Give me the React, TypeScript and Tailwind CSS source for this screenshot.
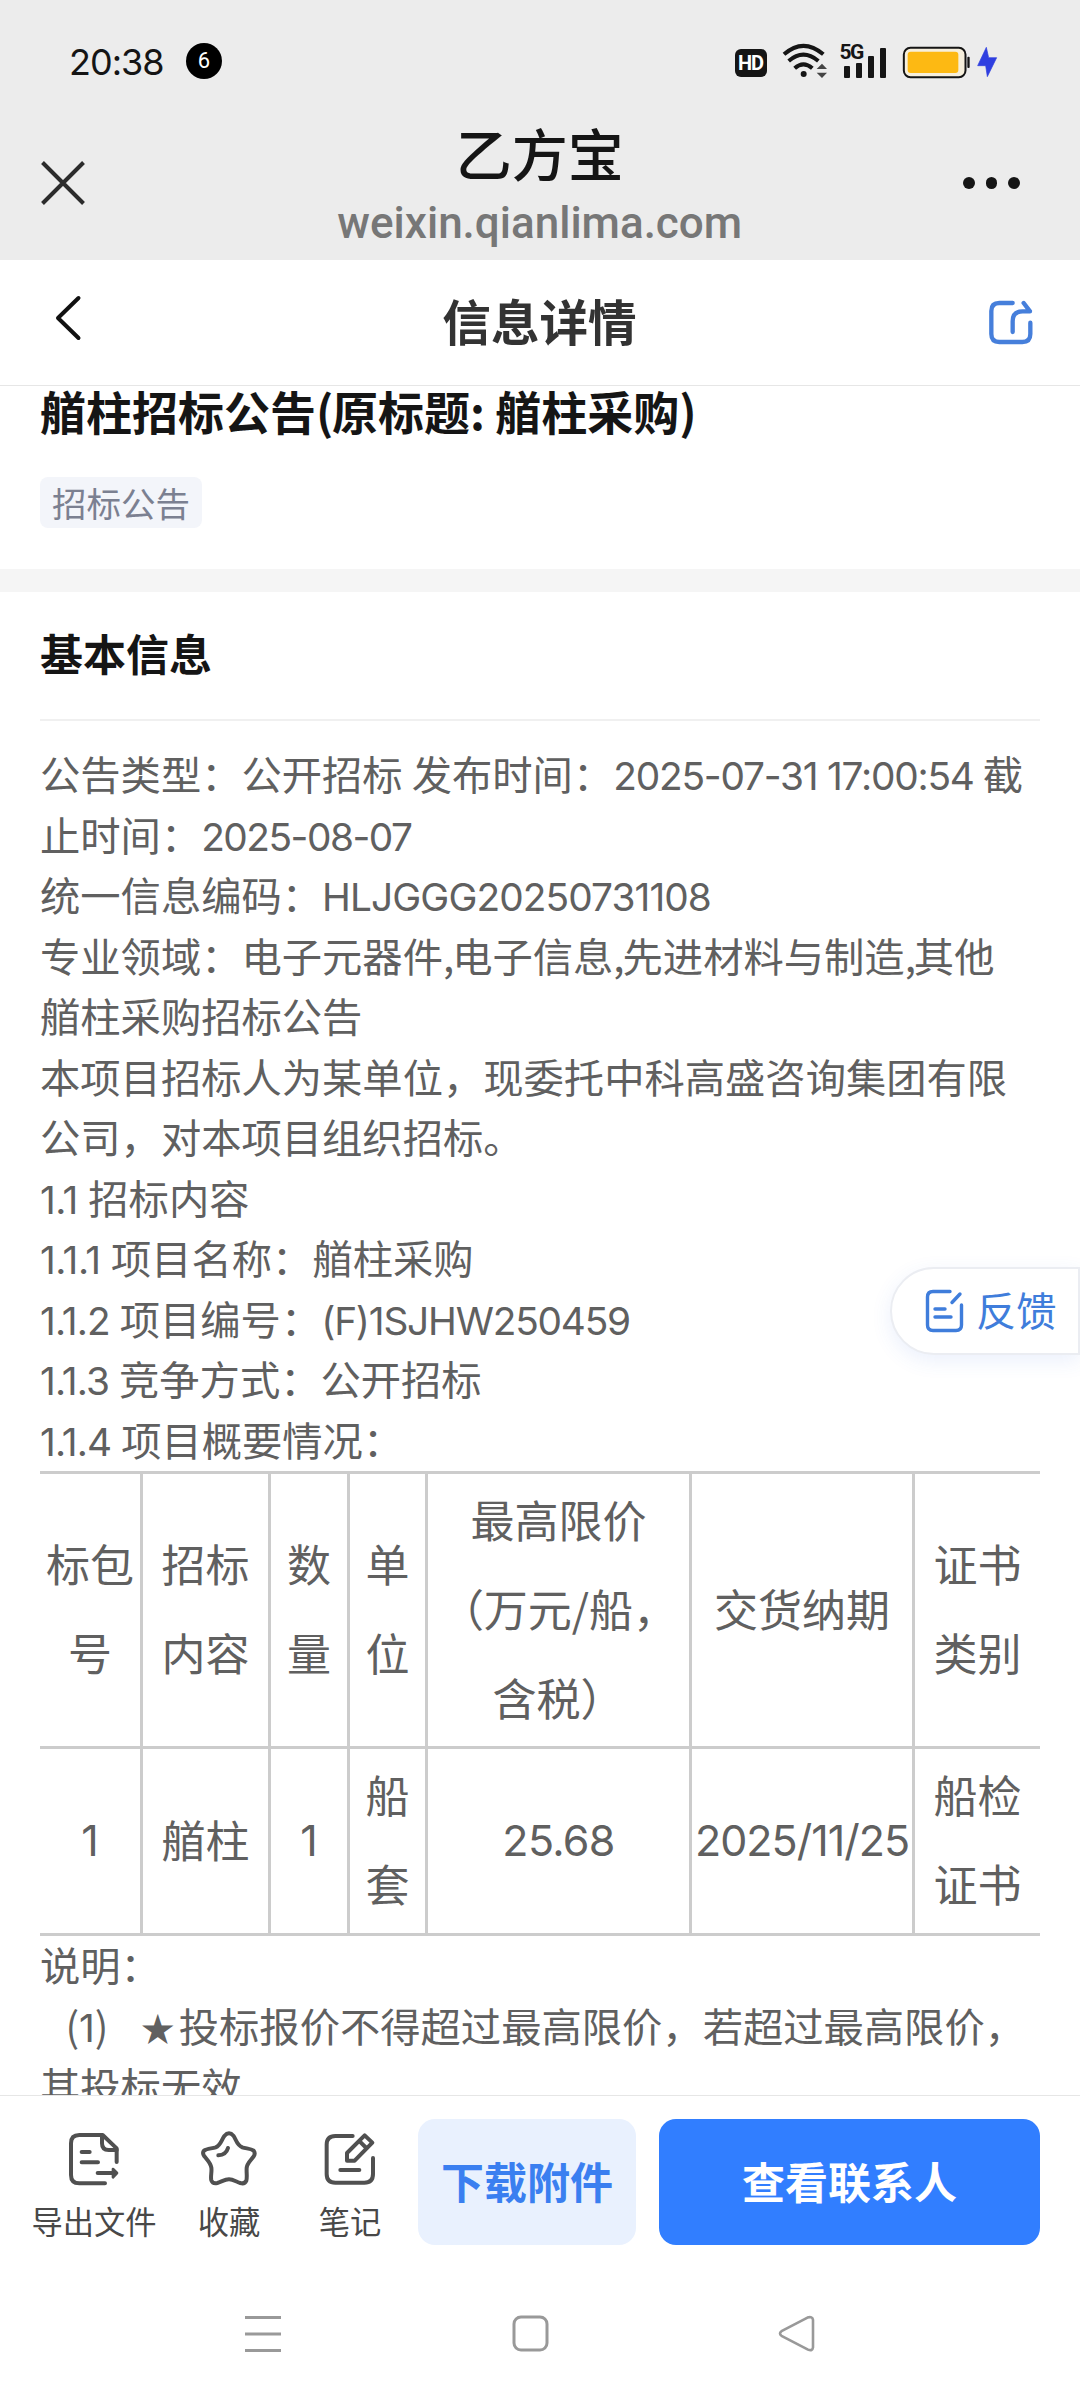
import type { ReactNode } from "react";

/* latin and digit runs sit a bit tighter than the chinese text around them */
const Num = ({ children, className = "tracking-[-1.2px] text-[38.8px]" }: { children: ReactNode; className?: string }) => (
  <span className={`font-['Inter','Noto_Sans_CJK_SC',sans-serif] ${className}`}>{children}</span>
);

const Line = ({ children }: { children: ReactNode }) => (
  <div className="h-[60.5px] whitespace-pre leading-[56px]">{children}</div>
);

const StatusBar = () => (
  <div className="flex h-[122px] items-center pl-[69px] pr-[82.5px]">
    <span className="mt-px w-[94px] font-['Inter',sans-serif] text-[36px] leading-[40px] tracking-[-1px] text-[#151515]">20:38</span>
    <span className="ml-[23px] flex size-9 items-center justify-center rounded-full bg-black font-['Roboto',sans-serif] text-[22px] leading-none text-white">
      6
    </span>

    <div className="ml-auto flex items-center">
      {/* HD */}
      <span className="mt-[3px] flex h-7 w-8 items-center justify-center rounded-[6px] bg-[#151515] font-['Roboto',sans-serif] text-[20px] font-bold leading-none tracking-[-1px] text-white">
        HD
      </span>

      {/* Wifi */}
      <svg className="ml-[15px]" width="46" height="36" viewBox="186 70 138 108" fill="none">
        <g stroke="#151515" strokeWidth="12">
          <path d="M192 104 Q250 53 310 104" />
          <path d="M206 124 Q250 86 295 124" />
          <path d="M224 146 Q250 122 277 146" />
        </g>
        <circle cx="251" cy="163" r="9" fill="#151515" />
        <path d="M290 148 L306 132 L321 148 Z M290 159 L306 175 L321 159 Z" fill="#444" />
      </svg>

      {/* Signal */}
      <div className="relative ml-[13px] flex h-[33px] w-[46px] items-end gap-[6px] pl-[3px]">
        <span className="absolute left-[-1px] top-[-1px] font-['Roboto',sans-serif] text-[21px] font-bold leading-[17px] tracking-[-1.5px] text-[#151515]">
          5G
        </span>
        <i className="h-3 w-[6px] rounded-[1px] bg-[#151515]" />
        <i className="h-[15px] w-[6px] rounded-[1px] bg-[#151515]" />
        <i className="h-[22px] w-[6px] rounded-[1px] bg-[#151515]" />
        <i className="h-[30px] w-[6px] rounded-[1px] bg-[#151515]" />
      </div>

      {/* Battery */}
      <svg className="ml-[15px] mt-[2px]" width="96" height="33" viewBox="546 78 288 99">
        <rect x="551.5" y="83.5" width="185" height="88" rx="20" fill="#f6efdc" stroke="#151515" strokeWidth="6" />
        <rect x="563" y="95" width="152" height="64" rx="9" fill="#fdb913" />
        <rect x="742" y="110" width="7" height="34" rx="3" fill="#151515" />
        <path d="M799 82 L773 137 H797 L802 170 L830 113 H806 Z" fill="#2f3fe0" stroke="#2f3fe0" strokeWidth="2" />
      </svg>
    </div>
  </div>
);

const BrowserBar = () => (
  <div className="flex h-[138px] items-start justify-between px-[41px]">
    <svg className="mt-[39px]" width="44" height="44" viewBox="0 0 44 44" stroke="#2b2b2b" strokeWidth="4">
      <path d="M1.5 1.5 L42.5 42.5 M42.5 1.5 L1.5 42.5" />
    </svg>
    <div className="ml-[31px] flex flex-col items-center">
      <span className="text-[56px] font-medium leading-[60px] text-[#151515]">乙方宝</span>
      <span className="mt-[8px] font-['Roboto',sans-serif] text-[44px] font-medium leading-[66px] text-[#777]">weixin.qianlima.com</span>
    </div>
    <div className="mr-[19px] mt-[55px] flex gap-[11px]">
      <i className="size-[11.5px] rounded-full bg-[#151515]" />
      <i className="size-[11.5px] rounded-full bg-[#151515]" />
      <i className="size-[11.5px] rounded-full bg-[#151515]" />
    </div>
  </div>
);

const PageNav = () => (
  <div className="flex h-[126px] items-center justify-between border-b border-[#e6e6e6] bg-white pl-[54px] pr-[46px]">
    <svg className="-mt-[10px]" width="28" height="46" viewBox="0 0 28 46" fill="none" stroke="#111" strokeWidth="4" strokeLinecap="round" strokeLinejoin="round">
      <path d="M24.5 3 L4 23 L24.5 43" />
    </svg>
    <h1 className="mb-[5px] ml-[9px] text-[48.6px] font-bold leading-[60px] text-[#333]">信息详情</h1>
    <svg width="46" height="46" viewBox="864 118 138 138" fill="none" stroke="#467fdb" strokeWidth="13" strokeLinecap="round" strokeLinejoin="round">
      <path d="M938 127 H898 Q874 127 874 151 V220 Q874 244 898 244 H967 Q991 244 991 220 V186" />
      <path d="M938 214 V182 Q938 152 968 152 H990 L971 127" />
    </svg>
  </div>
);

const cell = "border-b-3 border-r-3 border-[#cccccc] p-0 pb-1 text-center align-middle last:border-r-0";

const BidTable = () => (
  <table className="w-[1000px] table-fixed border-separate border-spacing-0 border-t-3 border-[#cccccc] text-[44px] leading-[89px]">
    <colgroup>
      <col className="w-[103px]" />
      <col className="w-[128px]" />
      <col className="w-[79px]" />
      <col className="w-[78px]" />
      <col className="w-[264px]" />
      <col className="w-[223px]" />
      <col className="w-[125px]" />
    </colgroup>
    <tbody>
      <tr className="h-[275px]">
        <td className={cell}>标包<br />号</td>
        <td className={cell}>招标<br />内容</td>
        <td className={cell}>数<br />量</td>
        <td className={cell}>单<br />位</td>
        <td className={cell}>最高限价<br />（万元/船，<br />含税）</td>
        <td className={cell}>交货纳期</td>
        <td className={cell}>证书<br />类别</td>
      </tr>
      <tr className="h-[187px]">
        <td className={cell}><Num className="text-[43px]">1</Num></td>
        <td className={cell}>艏柱</td>
        <td className={cell}><Num className="text-[43px]">1</Num></td>
        <td className={cell}>船<br />套</td>
        <td className={cell}><Num className="text-[43px] tracking-[-0.7px]">25.68</Num></td>
        <td className={`${cell} whitespace-nowrap`}><Num className="text-[43px] tracking-[-1px]">2025/11/25</Num></td>
        <td className={cell}>船检<br />证书</td>
      </tr>
    </tbody>
  </table>
);

const ExportIcon = () => (
  <svg width="54" height="56" viewBox="201 97 162 168" fill="none" stroke="#505050" strokeWidth="12" strokeLinecap="round" strokeLinejoin="round">
    <path d="M315 254 H238 Q213 254 213 229 V134 Q213 109 238 109 H308 L350 149 V190" />
    <path d="M306 112 V134 Q306 154 326 154 H350" />
    <path d="M245 160 H269 M245 191 H294 M293 223 H346" />
    <path d="M339 211 L351 223 L339 236 Z" fill="#505050" strokeWidth="8" />
  </svg>
);

const StarIcon = () => (
  <svg width="60" height="56" viewBox="596 97 180 168" fill="none" stroke="#505050" strokeWidth="12" strokeLinecap="round" strokeLinejoin="round">
    <path d="M672 112 Q686 96 700 112 C708 124 709 139 726 146 C738 150 751 149 760 156 Q766 164 760 173 C752 185 740 193 739 208 C738 221 741 236 738 246 Q733 257 720 253 C708 249 697 242 686 242 C674 242 662 250 651 253 Q637 256 633 245 C630 234 635 220 633 207 C631 193 621 184 612 173 Q605 163 611 156 C620 149 634 150 646 146 C661 140 663 124 672 112 Z" />
    <path d="M683 148 Q677 169 654 170" />
  </svg>
);

const NoteIcon = () => (
  <svg width="54" height="56" viewBox="969 97 162 168" fill="none" stroke="#505050" strokeWidth="12" strokeLinecap="round" strokeLinejoin="round">
    <path d="M1058 112 H1006 Q980 112 980 138 V226 Q980 252 1006 252 H1093 Q1119 252 1119 226 V178" />
    <path d="M1094 110 L1117 132 L1064 186 H1041 V163 Z M1079 128 L1099 148" />
    <path d="M1021 214 H1078" />
  </svg>
);

const actions = [
  { label: "导出文件", icon: <ExportIcon />, width: "w-[124px]" },
  { label: "收藏", icon: <StarIcon />, width: "w-[62px]" },
  { label: "笔记", icon: <NoteIcon />, width: "w-[62px]" },
];

export default function App() {
  return (
    <div lang="zh-CN" className="relative flex h-[2400px] w-[1080px] flex-col overflow-hidden bg-white font-['Noto_Sans_CJK_SC',sans-serif]">
      <header className="bg-[#ececec]">
        <StatusBar />
        <BrowserBar />
      </header>
      <PageNav />

      {/* Page content, runs on underneath the bottom actions */}
      <main className="h-[1709px] shrink-0">
        <section className="h-[183px] px-10">
          <h2 className="whitespace-pre text-[46px] font-bold leading-[48px] text-[#151515]">
            艏柱招标公告<span className="tracking-[-1.5px]">(</span>原标题: 艏柱采购)
          </h2>
          <span className="mt-[43px] flex h-[51px] w-[162px] items-center justify-center rounded-[8px] bg-[#f3f5fa] text-[34.5px] leading-none text-[#7b8091]">
            招标公告
          </span>
        </section>
        <div className="h-[23px] bg-[#f5f5f5]" />
        <section className="px-10 text-[#606060]">
          <h3 className="h-[129px] border-b-2 border-[#f0f0f0] text-[43px] font-bold leading-[121px] text-[#151515]">基本信息</h3>
          <div className="pt-[24px] text-[40.3px]">
            <Line>公告类型：公开招标 发布时间：<Num>2025-07-31 17:00:54</Num> 截</Line>
            <Line>止时间：<Num className="text-[38.8px] tracking-[-1.5px]">2025-08-07</Num></Line>
            <Line>统一信息编码：<Num className="text-[38.8px] tracking-[-0.9px]">HLJGGG20250731108</Num></Line>
            <Line>
              专业领域：电子元器件<span className="tracking-[-2px]">,</span>电子信息<span className="tracking-[-2px]">,</span>先进材料与制造<span className="tracking-[-2px]">,</span>其他
            </Line>
            <Line>艏柱采购招标公告</Line>
            <Line>本项目招标人为某单位，现委托中科高盛咨询集团有限</Line>
            <Line>公司，对本项目组织招标。</Line>
            <Line><Num className="text-[38.8px] tracking-[-0.5px]">1.1 </Num>招标内容</Line>
            <Line><Num className="text-[38.8px] tracking-[-0.5px]">1.1.1 </Num>项目名称：艏柱采购</Line>
            <Line><Num className="text-[38.8px] tracking-[-0.9px]">1.1.2 </Num>项目编号：<Num>(F)1SJHW250459</Num></Line>
            <Line><Num className="text-[38.8px] tracking-[-0.9px]">1.1.3 </Num>竞争方式：公开招标</Line>
            <Line><Num className="text-[38.8px] tracking-[-0.9px]">1.1.4 </Num>项目概要情况：</Line>
            <BidTable />
            <Line>说明：</Line>
            <Line>
              <span className="inline-block w-[39px] text-right">(</span><Num className="text-[38.8px]">1</Num><span className="inline-block w-[42px]">)</span><span className="inline-block w-[42px] text-center text-[34px]">★</span>投标报价不得超过最高限价，若超过最高限价，
            </Line>
            <Line>其投标无效</Line>
          </div>
        </section>
      </main>

      {/* Bottom actions */}
      <footer className="relative z-10 flex h-[181px] shrink-0 items-start border-t border-[#e6e6e6] bg-white pl-8 pr-10 pt-[23px]">
        <div className="flex gap-[43px] pt-3">
          {actions.map(({ label, icon, width }, i) => (
            <div key={label} className={`flex flex-col items-center ${width} ${i === 2 ? "ml-[15px]" : ""} ${i === 1 ? "-ml-px mr-px" : ""}`}>
              {icon}
              <span className="mt-[15px] whitespace-nowrap text-[31.3px] leading-[38px] text-[#484848]">{label}</span>
            </div>
          ))}
        </div>
        <button className="ml-auto h-[126px] w-[218px] rounded-[17px] bg-[#e9f1fe] pb-1 text-[43px] font-bold text-[#3a7ff0]">下载附件</button>
        <button className="ml-[23px] h-[126px] w-[381px] rounded-[17px] bg-[#317eff] pb-1 text-[43px] font-bold text-white">查看联系人</button>
      </footer>

      {/* System navigation */}
      <div className="relative z-10 flex h-[124px] items-start bg-white pl-[245px] pt-[38px]">
        <svg width="36" height="40" viewBox="0 0 36 40" stroke="#999" strokeWidth="3">
          <path d="M0 3.5 H36 M0 20 H36 M0 36.5 H36" />
        </svg>
        <svg className="ml-[231px]" width="38" height="40" viewBox="0 0 38 40" fill="none" stroke="#999" strokeWidth="3">
          <rect x="2" y="3" width="33" height="33" rx="7" />
        </svg>
        <svg className="ml-[228px]" width="38" height="40" viewBox="0 0 38 40" fill="none" stroke="#999" strokeWidth="2.6" strokeLinejoin="round">
          <path d="M3.5 17.2 L29.5 3.6 Q34.5 2 35 6 V33.4 Q34.5 37.4 30 35.6 L3.5 21.8 Q0.5 19.5 3.5 17.2 Z" />
        </svg>
      </div>

      {/* Floating feedback button */}
      <button className="absolute right-0 top-[1267px] flex h-[88px] w-[190px] items-center rounded-l-full border-2 border-[#ebedf2] bg-white pl-[33px] text-[40.3px] leading-none text-[#3f7ddb] shadow-[0_6px_20px_rgba(60,110,230,0.1)]">
        <svg className="mr-[11px] shrink-0" width="40" height="44" viewBox="0 0 40 44" fill="none" stroke="#3f7ddb" strokeWidth="3.4" strokeLinecap="round" strokeLinejoin="round">
          <path d="M25 2.5 H8 Q2.5 2.5 2.5 8 V36 Q2.5 41.5 8 41.5 H31 Q36.5 41.5 36.5 36 V16" />
          <path d="M35 5 L27 13.5 M10 20 H20 M10 28 H26" />
        </svg>
        <span className="mb-[3px]">反馈</span>
      </button>
    </div>
  );
}
